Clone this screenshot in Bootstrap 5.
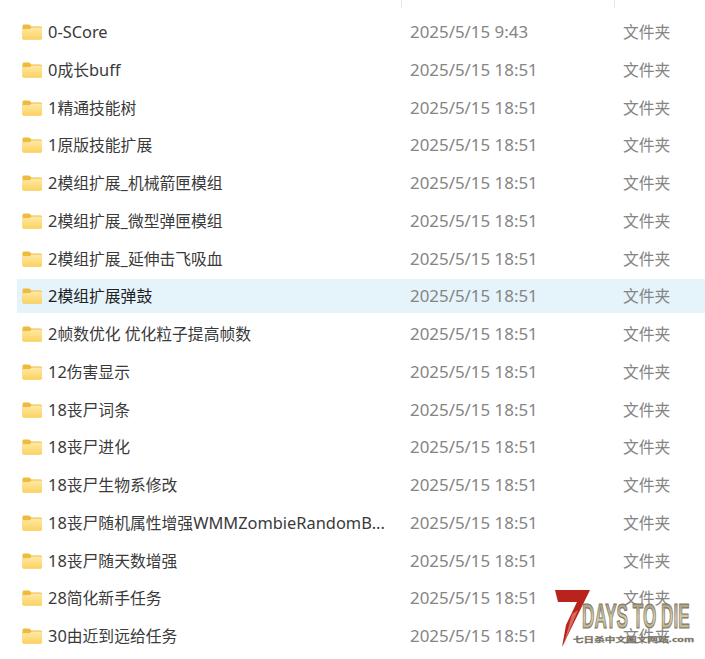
<!DOCTYPE html>
<html lang="zh"><head><meta charset="utf-8"><title>文件夹</title>
<link href="https://cdn.jsdelivr.net/npm/bootstrap@5.3.0/dist/css/bootstrap.min.css" rel="stylesheet">
<style>
html,body{height:659px;overflow:hidden;background:#fff}
body{font-family:"Noto Sans","Noto Sans CJK SC",sans-serif;position:relative}
.hdr{height:8px}
.hdr-cell{border-left:1px solid #e9e9e9}
.c-name{width:384px;padding-left:5px}
.c-date{width:213px;padding-left:9px}
.c-type{padding-left:9px}
.file-list{padding:7px 0 0 17px;display:flex;flex-direction:column;gap:3.75px}
.file-row{height:34px;font-size:15.8px;line-height:34px;white-space:nowrap;color:#3a3a3a}
.file-row.sel{background:#e5f3fb;color:#222}
.c-name svg{flex:none;margin-right:6px}
.lat{font-size:16.4px}
.c-date,.c-type{color:#858585}
.c-date{font-size:16.9px}
.logo{position:absolute;left:553px;top:589px;width:150px;height:64px}
.l-days{font:700 35px "Liberation Sans",sans-serif;fill:url(#lg);stroke:#7c7560;stroke-width:1.2px}
.l-sub{font:700 8px "Noto Sans CJK SC",sans-serif;fill:#6f6a5c;stroke:#8a8474;stroke-width:.3px}
</style></head><body>
<svg width="0" height="0" class="d-block position-absolute"><defs>
<linearGradient id="fg" x1="0" y1="0" x2="0" y2="1"><stop offset="0" stop-color="#ffe9a6"/><stop offset="1" stop-color="#fbd25f"/></linearGradient>
<linearGradient id="lg" x1="0" y1="0" x2="0" y2="1"><stop offset="0" stop-color="#8d8672"/><stop offset=".55" stop-color="#d6cfae"/><stop offset="1" stop-color="#a59c80"/></linearGradient>
<symbol id="folder" viewBox="0 0 20 16"><path d="M.5 2C.5 1 1.2.4 2 .4h4.600c.6 0 1 .3 1.400.7L9.300 2.400h8.900c1 0 1.800.7 1.800 1.700V14c0 1-.8 1.600-1.800 1.600H2C1.200 15.600.5 15 .5 14Z" fill="#f0bb3c"/><path d="M.5 5.200 8 5.100 9.600 3.600h8.700c1 0 1.700.6 1.700 1.600V14c0 1-.8 1.600-1.800 1.600H2C1.200 15.600.5 15 .5 14Z" fill="url(#fg)"/></symbol>
</defs></svg>
<div class="hdr d-flex"><div style="width:401px"></div><div class="hdr-cell" style="width:213px"></div><div class="hdr-cell flex-grow-1"></div></div>
<div class="file-list" id="list"></div>
<svg class="logo" viewBox="0 0 150 64" role="img">
<path d="M2 1H37L9 58 13 36 24 13H5Z" fill="#b8231c"/>
<path d="M19 25 25 21 13 50 10 58Z" fill="#d9685f"/>
<text class="l-days" transform="translate(29 39) scale(.49 1)">DAYS TO DIE</text>
<text class="l-sub" transform="translate(20 53) scale(1.33 .85)">七日杀中文图文网站.com</text>
</svg>
<script>
var names=["0-SCore","0成长buff","1精通技能树","1原版技能扩展","2模组扩展_机械箭匣模组","2模组扩展_微型弹匣模组","2模组扩展_延伸击飞吸血","2模组扩展弹鼓","2帧数优化 优化粒子提高帧数","12伤害显示","18丧尸词条","18丧尸进化","18丧尸生物系修改","18丧尸随机属性增强WMMZombieRandomB...","18丧尸随天数增强","28简化新手任务","30由近到远给任务"];
document.getElementById('list').innerHTML=names.map(function(n,i){
var label=n.replace(/[\x21-\x7e]+/g,'<span class="lat">$&</span>');
return '<div class="file-row d-flex'+(i==7?' sel':'')+'"><div class="c-name d-flex align-items-center"><svg width="20" height="16"><use href="#folder"/></svg><span>'+label+'</span></div><div class="c-date">2025/5/15 '+(i==0?'9:43':'18:51')+'</div><div class="c-type">文件夹</div></div>';
}).join('');
</script>
</body></html>
